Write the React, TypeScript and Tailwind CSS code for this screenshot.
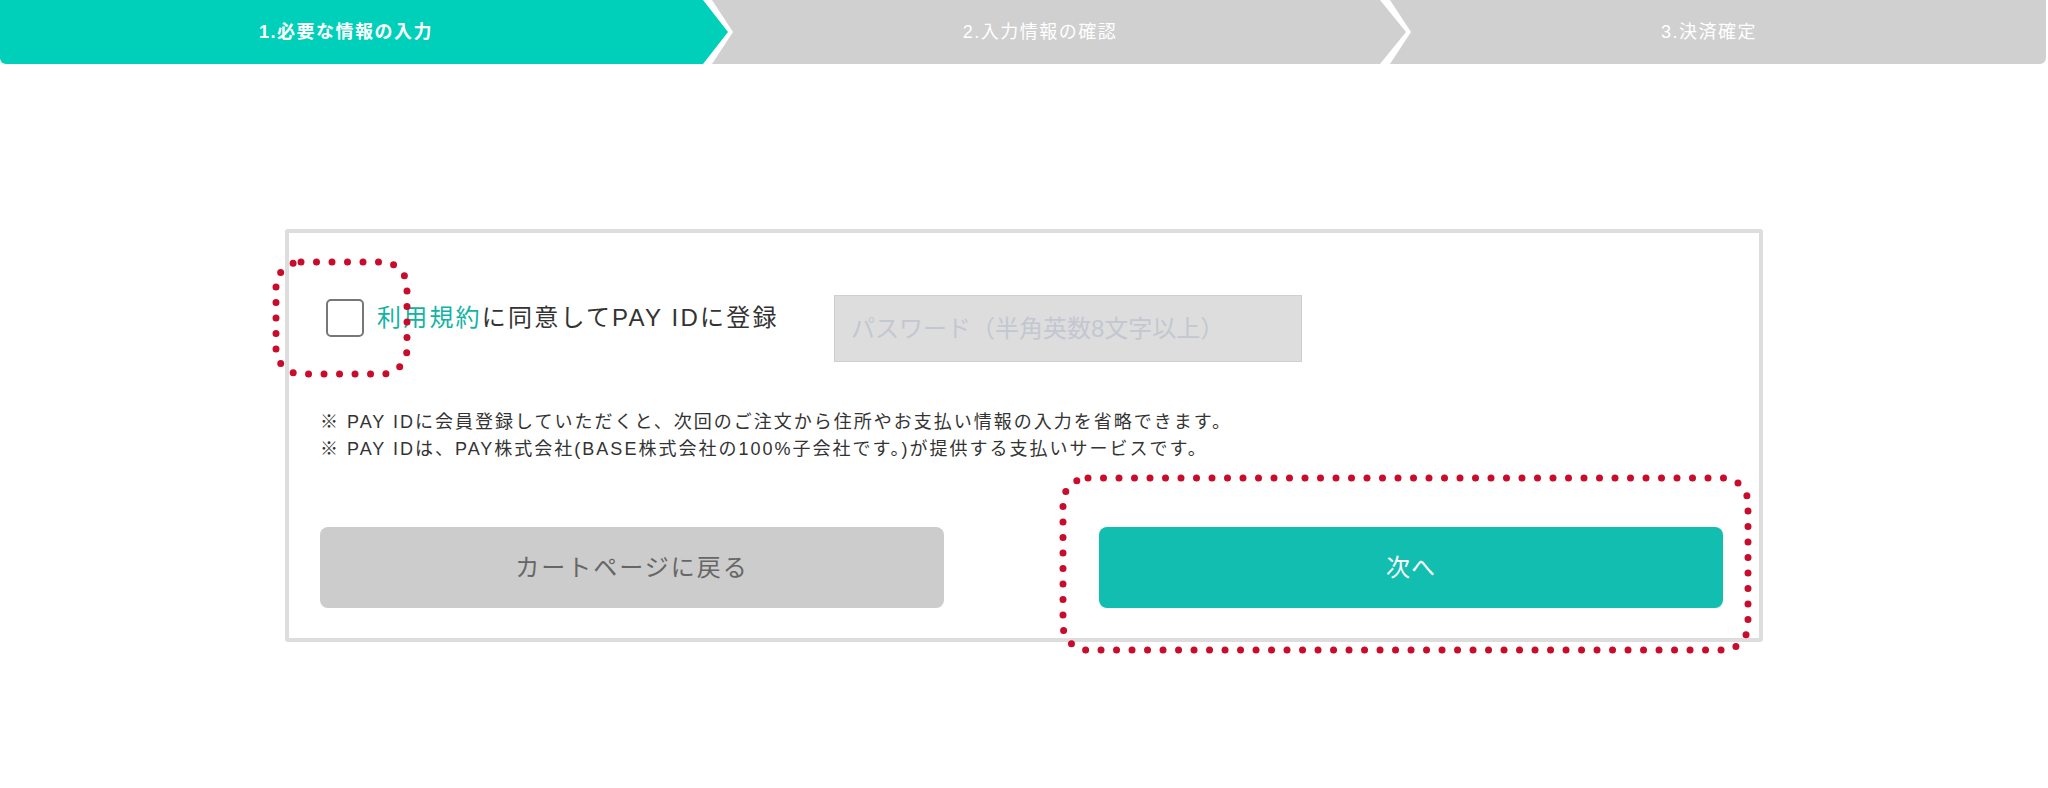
import React from "react";

function Steps() {
  return (
    <div className="flex h-[64px] overflow-hidden rounded-b-[6px] mr-[2px] text-white text-[18px] tracking-[1.5px]">
      <div className="relative z-0 w-[728px] shrink-0 flex items-center justify-center pr-[36px] bg-[#00cfba] font-bold [clip-path:polygon(0_0,703px_0,100%_50%,703px_100%,0_100%)]">
        1.必要な情報の入力
      </div>
      <div className="relative w-[702px] shrink-0 -ml-[24px] flex items-center justify-center pr-[30px] bg-[#d0d0d0] [clip-path:polygon(8px_0,676px_0,100%_50%,676px_100%,8px_100%,29px_50%)]">
        2.入力情報の確認
      </div>
      <div className="relative flex-1 -ml-[24px] flex items-center justify-center pr-[10px] bg-[#d0d0d0] [clip-path:polygon(8px_0,100%_0,100%_100%,8px_100%,29px_50%)]">
        3.決済確定
      </div>
    </div>
  );
}

function DotRect({ w, h, className }: { w: number; h: number; className: string }) {
  return (
    <svg
      className={className}
      width={w + 10}
      height={h + 10}
      viewBox={`0 0 ${w + 10} ${h + 10}`}
      fill="none"
    >
      <rect
        x={5}
        y={5}
        width={w}
        height={h}
        rx={25}
        stroke="#c80c2b"
        strokeWidth={7}
        strokeDasharray="0 15.5"
        strokeLinecap="round"
      />
    </svg>
  );
}

export default function App() {
  return (
    <div className="min-h-[788px] bg-white [font-family:'Liberation_Sans','Noto_Sans_CJK_JP',sans-serif] text-[#333333]">
      <Steps />
      <div className="mt-[165px] flex justify-center">
        <div className="relative w-[1478px] border-4 border-[#dddddd] rounded-[3px] pl-[31px] pr-[36px] pt-[62px] pb-[30px]">
          <div className="flex items-start h-[67px]">
            <label className="flex items-center w-[508px] ml-[6px] mt-[4px] h-[38px]">
              <span className="w-[38px] h-[38px] shrink-0 border-2 border-[#777777] rounded-[5px] bg-white" />
              <span className="ml-[13px] text-[24px] tracking-[2.2px] whitespace-nowrap">
                <span className="text-[#13b3a4]">利用規約</span>に同意してPAY IDに登録
              </span>
            </label>
            <input
              disabled
              placeholder="パスワード（半角英数8文字以上）"
              className="w-[468px] h-[67px] bg-[#dddddd] border border-[#cfcfcf] pl-[16px] text-[24px] placeholder:text-[#c3c7d1] outline-none"
            />
          </div>
          <div className="mt-[47px] text-[18px] leading-[27px] tracking-[2px] whitespace-nowrap">
            <p>※ PAY IDに会員登録していただくと、次回のご注文から住所やお支払い情報の入力を省略できます。</p>
            <p>※ PAY IDは、PAY株式会社(BASE株式会社の100%子会社です。)が提供する支払いサービスです。</p>
          </div>
          <div className="mt-[64px] flex justify-between">
            <button className="w-[624px] h-[81px] rounded-[8px] bg-[#cccccc] text-[#666666] text-[24px] tracking-[2px]">
              カートページに戻る
            </button>
            <button className="w-[624px] h-[81px] rounded-[8px] bg-[#12beb0] text-white text-[24px] tracking-[1px]">
              次へ
            </button>
          </div>
          <DotRect w={131} h={112} className="absolute left-[-18px] top-[24px] pointer-events-none" />
          <DotRect w={685} h={172} className="absolute left-[769px] top-[240px] pointer-events-none" />
        </div>
      </div>
    </div>
  );
}
